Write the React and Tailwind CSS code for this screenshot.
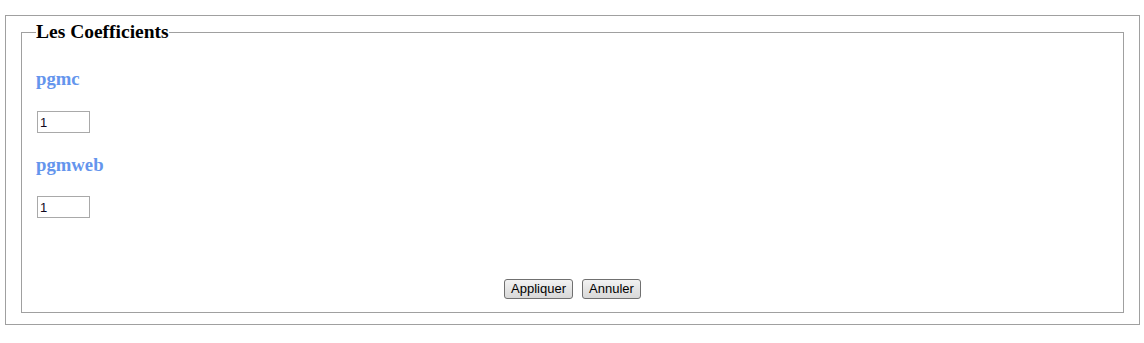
import React, { useState } from 'react';

const serif = { fontFamily: '"Liberation Serif", "Times New Roman", serif' };

function CoefField({ label, value, onChange, first }) {
    return (
        <div>
            <h3 className={`${first ? 'mt-[25px]' : 'mt-[21px]'} text-[18.72px] leading-[21px] font-bold text-[#6495ed] font-['Liberation_Serif',serif]`}>
                {label}
            </h3>
            <input
                type="text"
                value={value}
                onChange={(e) => onChange(e.target.value)}
                className={`${first ? 'mt-[22px]' : 'mt-[21px]'} ml-px block w-[53px] h-[22px] border border-[#a9a9a9] bg-white px-[2px] text-[13px] text-[#10081e] font-['Liberation_Sans',Arial,sans-serif] outline-none`}
            />
        </div>
    );
}

export default function App() {
    const [coefs, setCoefs] = useState({ pgmc: '1', pgmweb: '1' });

    const setCoef = (key) => (val) => setCoefs({ ...coefs, [key]: val });

    return (
        <div className="bg-white min-h-[343px] pt-[15px] px-[5px]">
            <div className="w-[1135px] h-[310px] border border-[#a0a0a0] pt-[5px] px-[15px]">
                <fieldset className="border border-[#a0a0a0] px-[14px] pb-[13px] h-[292px] flex flex-col">
                    <legend className="text-[19.5px] leading-[22px] font-bold text-black" style={serif}>
                        Les Coefficients
                    </legend>

                    <CoefField label="pgmc" value={coefs.pgmc} onChange={setCoef('pgmc')} first />
                    <CoefField label="pgmweb" value={coefs.pgmweb} onChange={setCoef('pgmweb')} />

                    {/* Buttons pinned to the bottom */}
                    <div className="mt-auto flex justify-center gap-[9px] font-['Liberation_Sans',Arial,sans-serif] text-[13px]">
                        <button className="h-[20px] w-[69px] rounded-[3px] border border-[#707070] bg-gradient-to-b from-[#f2f2f2] to-[#d8d8d8] text-black leading-[18px]">
                            Appliquer
                        </button>
                        <button className="h-[20px] w-[59px] rounded-[3px] border border-[#707070] bg-gradient-to-b from-[#f2f2f2] to-[#d8d8d8] text-black leading-[18px]">
                            Annuler
                        </button>
                    </div>
                </fieldset>
            </div>
        </div>
    );
}
